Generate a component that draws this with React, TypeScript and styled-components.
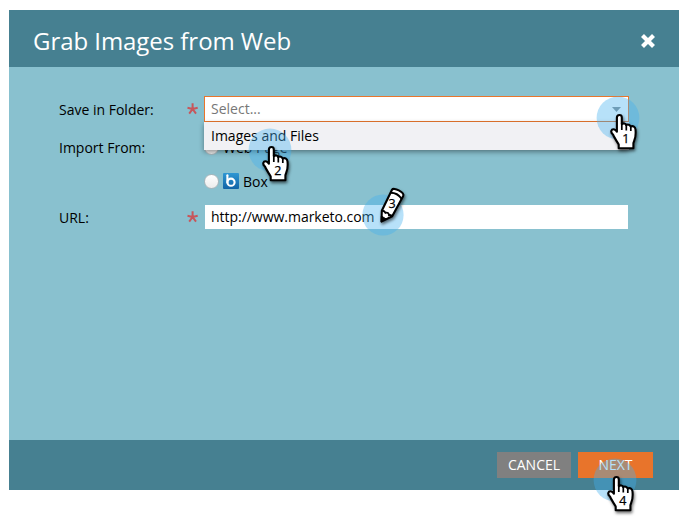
import React from "react";
import styled, { createGlobalStyle } from "styled-components";

const GlobalStyle = createGlobalStyle`
  * { box-sizing: border-box; }
  body { margin: 0; background: #fff; font-family: "Open Sans", "Noto Sans", sans-serif; font-size: 14px; color: #000; overflow: hidden; }
`;

const Page = styled.div`
  position: relative;
  width: 688px;
  height: 523px;
  padding: 10px 9px 33px;
`;

const Dialog = styled.section`
  display: flex;
  flex-direction: column;
  width: 670px;
  height: 480px;
  background: #89c1cf;
`;

const Header = styled.header`
  display: flex;
  align-items: center;
  justify-content: space-between;
  height: 57px;
  padding: 5px 24px 0;
  background: #468091;
`;

const Title = styled.h1`
  margin: 0;
  font-size: 24px;
  line-height: 32px;
  font-weight: 400;
  letter-spacing: -0.05px;
  color: #fff;
`;

const CloseButton = styled.button`
  display: flex;
  padding: 0;
  border: 0;
  background: none;
`;

const Form = styled.div`
  flex: 1;
  padding: 29px 50px 0;
`;

const Row = styled.div<{ $height: number }>`
  display: flex;
  height: ${(p) => p.$height}px;
`;

const Label = styled.label`
  width: 128px;
  height: 26px;
  line-height: 28px;
  white-space: nowrap;
`;

const Required = styled.span`
  display: flex;
  align-items: center;
  width: 17px;
  height: 26px;
`;

const Combo = styled.div`
  position: relative;
  width: 425px;
  height: 26px;
`;

const ComboField = styled.div`
  display: flex;
  align-items: center;
  justify-content: space-between;
  height: 26px;
  padding: 0 7px 0 6px;
  border: 1px solid #e8762d;
  background: #fff;
  color: #777;
  line-height: 24px;
`;

const Menu = styled.div`
  position: absolute;
  top: 26px;
  left: 0;
  z-index: 1;
  width: 425px;
  height: 28px;
  padding-left: 7px;
  line-height: 27px;
  background: #f1f1f4;
  box-shadow: 0 2px 5px rgba(0, 0, 0, 0.4);
`;

const Options = styled.div`
  display: flex;
  flex-direction: column;
  gap: 8px;
`;

const Option = styled.div`
  display: flex;
  align-items: center;
  height: 26px;
`;

const Radio = styled.span`
  width: 15px;
  height: 15px;
  margin-right: 4px;
  border: 1px solid #a9b5ba;
  border-radius: 50%;
  background: linear-gradient(#fff, #ececec);
`;

const OptionIcon = styled.span`
  display: flex;
  margin-right: 4px;
`;

const TextField = styled.div`
  width: 423px;
  height: 24px;
  margin: 1px 0 0 1px;
  padding-left: 6px;
  line-height: 23px;
  letter-spacing: -0.03px;
  background: #fff;
`;

const Footer = styled.footer`
  display: flex;
  gap: 7px;
  justify-content: flex-end;
  height: 50px;
  padding: 12px 26px;
  background: #468091;
`;

const Button = styled.button<{ $primary?: boolean }>`
  width: ${(p) => (p.$primary ? 75 : 74)}px;
  height: 26px;
  padding: 0;
  border: 0;
  background: ${(p) => (p.$primary ? "#e8742b" : "#808080")};
  color: #fff;
  font: 14px/26px "Open Sans", "Noto Sans", sans-serif;
`;

const Marker = styled.svg<{ $x: number; $y: number }>`
  position: absolute;
  left: ${(p) => p.$x - 30}px;
  top: ${(p) => p.$y - 34}px;
  z-index: 2;
  width: 64px;
  height: 76px;
  overflow: visible;
  pointer-events: none;
  font-family: "Open Sans", sans-serif;
`;

const Drawing = styled.g`
  filter: drop-shadow(1px 2px 1.5px rgba(0, 0, 0, 0.55));
`;

const Digit = styled.text`
  font-size: 12.5px;
  text-anchor: middle;
  stroke: #000;
  stroke-width: 0.25px;
`;

const Asterisk = () => (
  <svg width="12" height="12" viewBox="0 0 12 12" fill="none" stroke="#c7565b" strokeWidth="2">
    <path d="M5.6 .3V6M5.6 6 .5 4.8M5.6 6l5.1-1.2M5.6 6 2.2 10.7M5.6 6 9 10.7" />
  </svg>
);

const BoxLogo = () => (
  <svg width="16" height="16" viewBox="0 0 16 16">
    <defs>
      <linearGradient id="box" x1="0" y1="0" x2="0" y2="1">
        <stop stopColor="#2f97d3" />
        <stop offset="1" stopColor="#1164a6" />
      </linearGradient>
    </defs>
    <rect width="16" height="16" rx="1" fill="url(#box)" />
    <path d="M4.4 2.2v7.2" stroke="#fff" strokeWidth="2.1" strokeLinecap="round" />
    <circle cx="8" cy="9.2" r="3.6" fill="none" stroke="#fff" strokeWidth="2.1" />
  </svg>
);

const HandMarker = ({ x, y, label }: { x: number; y: number; label: string }) => (
  <Marker $x={x} $y={y} viewBox="-30 -34 64 76">
    <circle r="21.4" fill="#41b0ee" fillOpacity=".38" />
    <Drawing>
      <path
        d="M-1.1-.6C-1.1-3.8 3.8-3.8 3.8-.6V6.1C5.4 4.8 7.5 5.3 8.2 7 9.8 6 12 6.7 12.6 8.4 15.2 7.5 17.2 8.8 17.5 11.5 17.9 16 17.8 19.4 16.2 22.8L15.4 25.2V30.3H.7V26.5C-1.6 22.8-3.5 19.9-5 16.5-8 14.2-6.8 10.5-3.6 11.4-2.4 11.8-1.8 12.7-1.1 13.7Z"
        fill="#fff" stroke="#000" strokeWidth="2.1" strokeLinejoin="round"
      />
      <path d="M3.8 5v7M8.3 6.5v6M12.8 8v5" stroke="#000" strokeWidth="1.7" fill="none" />
    </Drawing>
    <Digit x="7.8" y="25.3">{label}</Digit>
  </Marker>
);

const PencilMarker = ({ x, y, label }: { x: number; y: number; label: string }) => (
  <Marker $x={x} $y={y} viewBox="-30 -34 64 76">
    <circle r="20.6" fill="#41b0ee" fillOpacity=".38" />
    <Drawing>
      <path
        d="M-1.5 6.6-1.2-4.2 9-25.2C10.5-28.2 21.9-22.8 20.2-19.1L9.2 1.3Z"
        fill="#fff" stroke="#000" strokeWidth="2.1" strokeLinejoin="round"
      />
      <path d="M-1.8 6.8-1.7 1 3.3 4Z" fill="#000" stroke="#000" />
      <path d="M-1.2-4.2Q1.3-4.8 2.5-2.2 5.7-3 6 .2 8-.3 9.2 1.3M7.5-22.2Q14.5-22.3 18.6-16.2" fill="none" stroke="#000" strokeWidth="1.9" />
    </Drawing>
    <Digit x="9" y="-6.8">{label}</Digit>
  </Marker>
);

export default function App() {
  return (
    <>
      <GlobalStyle />
      <Page>
        <Dialog>
          <Header>
            <Title>Grab Images from Web</Title>
            <CloseButton aria-label="Close">
              <svg width="14" height="14" viewBox="0 0 14 14" stroke="#fff" strokeWidth="4.2">
                <path d="m1.5 1.5 11 11m0-11-11 11" />
              </svg>
            </CloseButton>
          </Header>
          <Form>
            <Row $height={38}>
              <Label>Save in Folder:</Label>
              <Required><Asterisk /></Required>
              <Combo>
                <ComboField>
                  Select...
                  <svg width="9" height="5" viewBox="0 0 9 5"><path d="M0 0h9L4.5 5Z" fill="#8a9196" /></svg>
                </ComboField>
                <Menu>Images and Files</Menu>
              </Combo>
            </Row>
            <Row $height={70}>
              <Label>Import From:</Label>
              <Required />
              <Options>
                <Option><Radio />Web Page</Option>
                <Option>
                  <Radio />
                  <OptionIcon><BoxLogo /></OptionIcon>
                  Box
                </Option>
              </Options>
            </Row>
            <Row $height={26}>
              <Label>URL:</Label>
              <Required><Asterisk /></Required>
              <TextField>http://www.marketo.com</TextField>
            </Row>
          </Form>
          <Footer>
            <Button>CANCEL</Button>
            <Button $primary>NEXT</Button>
          </Footer>
        </Dialog>
        <HandMarker x={617.5} y={118} label="1" />
        <HandMarker x={269.7} y={150} label="2" />
        <PencilMarker x={382.8} y={214.5} label="3" />
        <HandMarker x={614.6} y={480} label="4" />
      </Page>
    </>
  );
}
